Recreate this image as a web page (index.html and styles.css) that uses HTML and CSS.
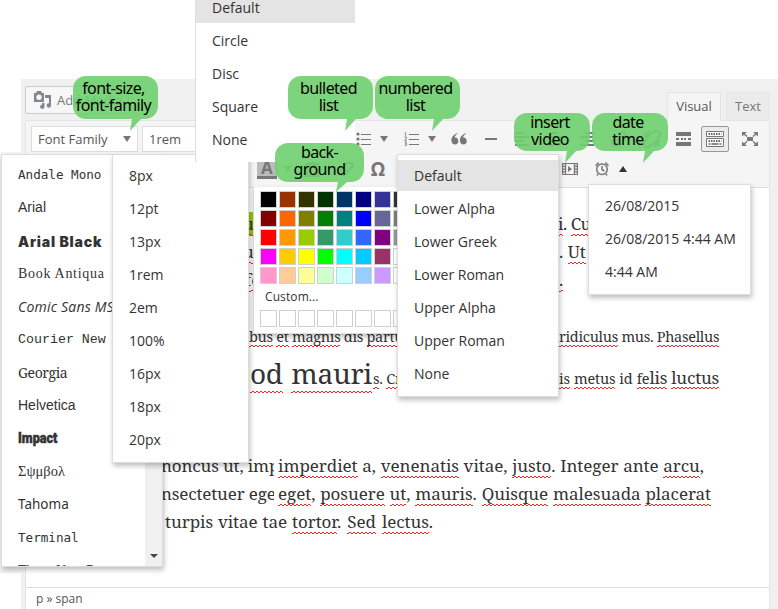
FILE: index.html
```html
<!DOCTYPE html>
<html lang="en">
<head>
<meta charset="utf-8">
<title>Editor</title>
<link rel="stylesheet" href="styles.css">
</head>
<body>
<main class="screen">
  <section class="editor">
    <header class="head">
      <button class="media"><svg width="18" height="18" viewBox="0 0 18 18"><path fill="#82878c" fill-rule="evenodd" d="M0 2h2l1-2h4l1 2h2v9H0zM5 3.500a2.700 2.700 0 1 0 0 5.400a2.700 2.700 0 0 0 0-5.400z"/><path fill="#82878c" d="M11 4h6v10.500a2.200 2.200 0 1 1-2-2.200V7h-4zM8 12h2.500v3.500a2.200 2.200 0 1 1-2.500-2z"/></svg>Add Media</button>
      <nav class="tabs"><span class="tab on">Visual</span><span class="tab">Text</span></nav>
    </header>
    <div class="panel">
      <div class="toolbar">
        <div class="row first">
          <span class="select family">Font Family<i class="caret"></i></span>
          <span class="select size">1rem</span>
          <svg class="ic" width="16" height="14" viewBox="0 0 16 14"><g fill="#777"><circle cx="2" cy="2" r="1.600"/><circle cx="2" cy="7" r="1.600"/><circle cx="2" cy="12" r="1.600"/><path d="M5 2h10v1H5zM5 7h10v1H5zM5 12h10v1H5z"/></g></svg>
          <i class="caret"></i>
          <svg class="ic pushed" width="16" height="14" viewBox="0 0 16 14"><path fill="#777" d="M5 2h10v1H5zM5 7h10v1H5zM5 12h10v1H5z"/><path fill="none" stroke="#777" stroke-width=".9" d="M.6.800h1v3M.5 5h2v1.300L.6 8.300h2.200M.5 10h2l-1 1.500h1v1.800h-2"/></svg>
          <i class="caret"></i>
          <svg class="ic" width="16" height="14" viewBox="0 0 16 14"><path fill="#777" d="M7 1C4.500 3 3.800 4.300 3.600 5.500c2-.4 3.600 1 3.600 3.200A3.300 3.300 0 0 1 3.800 12.500C1.500 12.500.4 10.500.4 8.300.4 5 3 2 7 1zM15.500 1c-2.500 2-3.200 3.300-3.400 4.500 2-.4 3.600 1 3.600 3.200a3.300 3.300 0 0 1-3.400 3.800c-2.300 0-3.400-2-3.400-4.200 0-3.300 2.600-6.300 6.600-7.300z"/></svg>
          <svg class="ic" width="12" height="14" viewBox="0 0 12 14"><path fill="#777" d="M0 6h12v2H0z"/></svg>
          <svg class="ic" width="14" height="14" viewBox="0 0 14 14"><path stroke="#777" stroke-width="2" d="M0 1h9M0 5h14M0 9h9M0 13h14"/></svg>
          <svg class="ic" width="14" height="14" viewBox="0 0 14 14"><path stroke="#777" stroke-width="2" d="M3 1h8M0 5h14M3 9h8M0 13h14"/></svg>
          <svg class="ic" width="14" height="14" viewBox="0 0 14 14"><path stroke="#777" stroke-width="2" d="M5 1h9M0 5h14M5 9h9M0 13h14"/></svg>
          <svg class="ic" width="18" height="18" viewBox="0 0 18 18"><path fill="none" stroke="#777" stroke-width="2" d="M7 11l5-5M8 5l2-2a3.300 3.300 0 0 1 5 5l-3 3M10 13l-2 2a3.300 3.300 0 0 1-5-5l3-3"/></svg>
          <svg class="ic" width="18" height="18" viewBox="0 0 18 18"><path fill="none" stroke="#777" stroke-width="2" d="M9 4l2-2a3.300 3.300 0 0 1 5 5l-2 2M9 14l-2 2a3.300 3.300 0 0 1-5-5l2-2M2 2l5 5M1 6l4 1M6 1l1 4M16 16l-5-5M17 12l-4-1M12 17l-1-4"/></svg>
          <svg class="ic" width="15" height="14" viewBox="0 0 15 14"><path fill="#777" d="M0 0h15v4H0zM0 10h15v4H0zM0 6h3v2H0zM5 6h2v2H5zM8 6h2v2H8zM12 6h3v2h-3z"/></svg>
          <span class="pressed"><svg width="18" height="16" viewBox="0 0 18 16"><path fill="#fff" stroke="#777" d="M.5.500h17v5H.5zM.5 7.500h17v8H.5z"/><path stroke="#666" stroke-width="2" stroke-dasharray="1.500 1" d="M2.500 3h13M2.500 10h13"/><path stroke="#666" stroke-width="1.500" d="M2.500 13h2M5.500 13h7M13.500 13h2"/></svg></span>
          <svg class="ic" width="16" height="14" viewBox="0 0 16 14"><path fill="#777" d="M5 5h6v4H5zM0 0h5L0 4.500zM16 0h-5l5 4.500zM0 14h5L0 9.500zM16 14h-5l5-4.500z"/><path stroke="#777" stroke-width="1.500" d="M1 1l4 3.500M15 1l-4 3.500M1 13l4-3.500M15 13l-4-3.500"/></svg>
        </div>
        <div class="row second">
          <span class="backcolor">A</span>
          <i class="caret"></i>
          <svg class="ic" width="16" height="16" viewBox="0 0 16 16"><path fill="#777" fill-rule="evenodd" d="M1 2h4V0h6v2h4v14H1zM4 7v6h8V7z"/></svg>
          <svg class="ic" width="16" height="16" viewBox="0 0 16 16"><path fill="none" stroke="#777" stroke-width="2" d="M1 11l8-9h5l1 3-8 9H3zM5 7l5 4"/></svg>
          <span class="omega">Ω</span>
          <svg class="ic video" width="16" height="12" viewBox="0 0 16 12"><path fill="#777" fill-rule="evenodd" d="M0 0h16v12H0zM1.200 1.200v1.600h1.700V1.200zM1.200 4v1.600h1.700V4zM1.200 6.700v1.500h1.700V6.700zM1.200 9.400v1.500h1.700V9.400zM4.200 1v10h7.600V1zM13.100 1.200v1.600h1.700V1.200zM13.100 4v1.600h1.700V4zM13.100 6.700v1.500h1.700V6.700zM13.100 9.400v1.500h1.700V9.400z"/><path fill="#777" d="M6 3l4 3-4 3z"/></svg>
          <svg class="ic" width="14" height="14" viewBox="0 0 14 14"><g fill="none" stroke="#777" stroke-width="1.500"><circle cx="7" cy="7.300" r="5.300"/><path d="M7 4v3.500l2.300 1.500M.5 3.800L3.700.6M13.500 3.800L10.300.6M3 12l-1 1.500M11 12l1 1.500"/></g></svg>
          <i class="caret up"></i>
        </div>
      </div>
      <article class="content">
        <div class="line l1"><span class="run a hl"><u>u</u></span><span class="run b"><u>i</u>. <u>Cu</u></span></div>
        <div class="line"><span class="run a"><u>u</u></span><span class="run c">. <u>Ut</u></span></div>
        <div class="line"><span class="run a fe"><u>fe</u></span><span class="run c"><u>.</u></span></div>
        <div class="line small"><span class="run d"><u>bus</u> <u>et</u> <u>magnis</u> dis <u>partu</u></span><span class="run e"><u>ridiculus</u> mus. <u>Phasellus</u></span></div>
        <div class="line large"><span class="run g"><u>od</u> <u>mauri</u></span><span class="run h"><u>s</u>. <u>Cr</u></span><span class="run i"><u>is</u> <u>metus</u> id <u>fe<b>lis</b></u> <u><b>luctus</b></u></span></div>
        <div class="line l6"><span class="run j">noncus ut, imp</span><span class="run k"><u>imperdiet</u> a, <u>venenatis</u> vitae, <u>justo</u>. Integer ante <u>arcu</u>,</span></div>
        <div class="line"><span class="run j">nsectetuer ege</span><span class="run m"><u>eget</u>, <u>posuere</u> <u>ut</u>, <u>mauris</u>. <u>Quisque</u> <u>malesuada</u> <u>placerat</u></span></div>
        <div class="line"><span class="run n">turpis vitae tae</span><span class="run o"><u>tortor</u>. <u>Sed</u> <u>lectus</u>.</span></div>
      </article>
      <footer class="status">p » span</footer>
    </div>
  </section>
  <div class="gutter"></div>

  <div class="menu fonts">
    <ul>
      <li class="andale">Andale Mono</li><li class="arial">Arial</li><li class="black">Arial Black</li><li class="antiqua">Book Antiqua</li><li class="comic">Comic Sans MS</li><li class="courier">Courier New</li><li class="georgia">Georgia</li><li class="arial">Helvetica</li><li class="impact"><span>Impact</span></li><li class="symbol">Σψμβολ</li><li class="tahoma">Tahoma</li><li class="andale">Terminal</li><li class="times">Times New Roman</li>
    </ul>
    <div class="scroll"><i class="caret"></i></div>
  </div>
  <div class="menu colors">
    <div class="swatches" id="swatches"></div>
    <div class="custom">Custom...</div>
    <div class="swatches" id="blank"></div>
  </div>
  <ul class="menu sizes"><li>8px</li><li>12pt</li><li>13px</li><li>1rem</li><li>2em</li><li>100%</li><li>16px</li><li>18px</li><li>20px</li></ul>
  <ul class="menu bullets"><li class="sel">Default</li><li>Circle</li><li>Disc</li><li>Square</li><li>None</li></ul>
  <ul class="menu numbers"><li class="sel">Default</li><li>Lower Alpha</li><li>Lower Greek</li><li>Lower Roman</li><li>Upper Alpha</li><li>Upper Roman</li><li>None</li></ul>
  <ul class="menu dates"><li>26/08/2015</li><li>26/08/2015 4:44 AM</li><li>4:44 AM</li></ul>

  <div class="note n-font">font-size,<br>font-family</div>
  <div class="note n-bullet">bulleted<br>list</div>
  <div class="note n-number">numbered<br>list</div>
  <div class="note n-back">back-<br>ground</div>
  <div class="note n-video">insert<br>video</div>
  <div class="note n-date">date<br>time</div>
</main>
<script src="swatches.js"></script>
</body>
</html>
```
FILE: styles.css
```css
* { box-sizing: border-box; }
body { margin: 0; background: #fff; font: 13px/1.4 "Open Sans", sans-serif; color: #444; }
ul { list-style: none; margin: 0; padding: 0; }
u { text-decoration: none; }
b { font-weight: normal; }
.screen { position: relative; width: 778px; height: 609px; overflow: hidden; padding: 79px 0 0 21px; }
.editor { height: 530px; background: #f0f0f0; padding: 0 8px 0 4px; display: flex; flex-direction: column; }
.head { height: 41px; flex: none; display: flex; justify-content: space-between; align-items: flex-start; padding-top: 7px; }
.media { width: 104px; height: 28px; padding: 0 0 0 8px; display: flex; align-items: center; gap: 5px; border: 1px solid #ccc; border-radius: 3px; background: #f7f7f7; color: #777; font: 13px "Open Sans", sans-serif; white-space: nowrap; }
.tabs { display: flex; gap: 5px; padding-top: 6px; }
.tab { height: 28px; width: 44px; border: 1px solid #e5e5e5; border-bottom: 0; background: #ebebeb; color: #777; text-align: center; line-height: 27px; font-size: 13px; }
.tab.on { width: 54px; height: 29px; position: relative; background: #f5f5f5; color: #555; }
.panel { flex: 1; display: flex; flex-direction: column; border: 1px solid #e5e5e5; border-bottom: 0; background: #fff; }
.toolbar { height: 67px; flex: none; background: #f5f5f5; border-bottom: 1px solid #ddd; padding: 5px 0 0 5px; }
.row { display: grid; align-items: center; justify-items: center; }
.first { height: 26px; grid-template-columns: 111px 207px 29px 12px 36px 12px 42px 22px 40px 24px 42px 22px 44px 18px 46px 24px; }
.second { height: 34px; padding-left: 226px; grid-template-columns: 20px 22px 26px 41px 24px 196px 32px 10px; }
.select { justify-self: start; height: 26px; border: 1px solid #ddd; background: #fff; padding: 0 6px; display: flex; justify-content: space-between; align-items: center; font-size: 13px; color: #555; }
.family { width: 107px; }
.size { width: 90px; }
.ic { display: block; }
.pushed { margin-left: 8px; }
.video { margin-left: 164px; }
.caret { display: block; width: 0; height: 0; border: 4px solid transparent; border-top: 6px solid #777; border-bottom: 0; }
.caret.up { border-top: 0; border-bottom: 6px solid #333; }
.pressed { width: 28px; height: 26px; border: 1px solid #999; border-radius: 2px; background: #ebebeb; display: grid; place-items: center; }
.backcolor { width: 20px; height: 20px; background: #bbb; border-bottom: 3px solid #777; color: #777; font: bold 17px/17px "Noto Sans", sans-serif; text-align: center; }
.omega { color: #777; font: bold 19px/24px "Noto Sans", sans-serif; }
.content { flex: 1; overflow: hidden; padding-top: 22px; font-family: "Noto Serif", "DejaVu Serif Condensed", "DejaVu Serif", serif; font-stretch: condensed; font-size: 17px; color: #333; }
.line { height: 28px; line-height: 28px; display: flex; white-space: nowrap; align-items: baseline; }
.run { display: block; flex: none; text-align-last: justify; }
u { padding-bottom: 1px; background: linear-gradient(90deg, #f22 50%, transparent 50%) 0 100% / 4px 1px repeat-x, linear-gradient(90deg, transparent 50%, #f22 50%) 0 calc(100% - 1px) / 4px 1px repeat-x; }
.a { margin-left: 217px; width: 11px; text-align-last: left; }
.fe { margin-left: 219px; width: 9px; }
.hl u { background-color: #9c0; }
.b { margin-left: 304px; width: 36px; text-align-last: left; letter-spacing: -.5px; }
.c { margin-left: 305px; width: 26px; }
.small { margin-top: 28px; font-size: 14.500px; letter-spacing: -.3px; }
.d { margin-left: 223px; width: 148px; }
.e { margin-left: 162px; width: 160px; }
.large { height: 42px; line-height: 46px; font-size: 14.500px; letter-spacing: -.2px; }
.g { margin-left: 224px; width: 122px; font-size: 28px; letter-spacing: -.3px; }
.h { margin-left: 1px; width: 24px; text-align-last: left; }
.i { margin-left: 162px; width: 160px; }
.i b { font-size: 17px; }
.l6 { margin-top: 60px; }
.j { margin-left: 135px; width: 113px; overflow: hidden; letter-spacing: -.15px; }
.k { margin-left: 4px; width: 426px; letter-spacing: -.05px; }
.m { margin-left: 4px; width: 433px; letter-spacing: -.05px; }
.n { margin-left: 139px; width: 122px; letter-spacing: -.05px; }
.o { margin-left: 5px; width: 141px; letter-spacing: -.05px; }
.status { height: 22px; flex: none; border-top: 1px solid #ddd; padding-left: 10px; line-height: 22px; font-size: 12px; color: #555; }
.gutter { position: absolute; left: 0; top: 152px; width: 25px; height: 421px; background: #f5f5f5; }

.menu { position: absolute; background: #fff; border: 1px solid #ddd; box-shadow: 1px 3px 5px rgba(0,0,0,.25); color: #333; font-size: 14px; }
.menu li { height: 33px; line-height: 33px; padding-left: 16px; white-space: nowrap; }
.fonts { left: 1px; top: 154px; width: 162px; height: 413px; display: flex; overflow: hidden; padding-top: 3px; }
.fonts ul { width: 143px; overflow: hidden; }
.scroll { width: 17px; margin-top: -3px; background: #f0f0f0; display: flex; align-items: flex-end; justify-content: center; padding-bottom: 8px; }
.scroll .caret { border-top: 4px solid #444; }
.sizes { left: 112px; top: 154px; width: 137px; height: 309px; padding-top: 4px; }
.bullets { left: 195px; top: -10px; width: 160px; height: 172px; border-right: 0; border-bottom: 0; box-shadow: none; }
.bullets .sel { height: 32px; margin-bottom: 1px; }
.numbers { left: 397px; top: 154px; width: 162px; height: 243px; padding-top: 5px; }
.sel { background: #e4e4e4; }
.menu.numbers .sel { height: 31px; line-height: 31px; margin-bottom: 1px; }
.dates { left: 588px; top: 184px; width: 163px; height: 111px; padding-top: 4px; }
.colors { left: 253px; top: 187px; width: 160px; height: 147px; padding: 3px 6px; border-top: 0; }
.swatches { display: grid; grid-template-columns: repeat(8, 17px); gap: 2px; }
.swatches i { height: 17px; border: 1px solid #d0d0d0; }
.colors .swatches { padding-top: 1px; }
.custom { height: 25px; line-height: 26px; padding-left: 5px; font-size: 12px; letter-spacing: .1px; }

.andale { font: 12.600px "DejaVu Sans Mono", monospace; }
.arial { font-family: "Liberation Sans", sans-serif; }
.black { font: 900 14px Inter, sans-serif; letter-spacing: .8px; }
.menu .black { line-height: 35px; }
.antiqua { font: 14px "Liberation Serif", serif; letter-spacing: .7px; }
.comic { font: italic 14px "Open Sans", sans-serif; letter-spacing: .2px; }
.courier { font: 13.300px "Liberation Mono", monospace; }
.georgia { font: 14px "Noto Serif", "DejaVu Serif Condensed", serif; letter-spacing: -.4px; }
.impact { font: 900 14.500px Roboto, sans-serif; }
.impact span { display: inline-block; transform: scaleX(.87); transform-origin: left; -webkit-text-stroke: .5px #333; }
.symbol { font: 14.500px "Liberation Serif", serif; }
.tahoma { font: 13.500px "Noto Sans", sans-serif; }
.times { font: 14px "Liberation Serif", serif; }

.note { position: absolute; border-radius: 13px; background: rgba(110,207,110,.9); color: #000; font: 16px/17px "Noto Sans", sans-serif; letter-spacing: -.6px; text-align: center; width: 85px; height: 43px; padding: 4px 4px 0 0; white-space: nowrap; }
.note::after { content: ""; position: absolute; top: 100%; left: 57px; width: 11px; height: 12px; background: inherit; clip-path: polygon(18% 0, 100% 0, 0 100%); }
.n-font { left: 73px; top: 76px; }
.n-bullet { left: 288px; top: 76px; }
.n-number { left: 375px; top: 76px; }
.n-back { left: 275px; top: 143px; width: 89px; height: 39px; padding-top: 1px; padding-right: 0; }
.n-back::after { left: 61px; height: 10px; }
.n-video, .n-date { top: 113px; width: 76px; height: 38px; padding-top: 1px; }
.n-video { left: 514px; }
.n-date { left: 592px; }
.n-video::after, .n-date::after { left: 51px; }
```
FILE: swatches.js
```js
const colors = "000000 993300 333300 003300 003366 000080 333399 333333 800000 ff6600 808000 008000 008080 0000ff 666699 808080 ff0000 ff9900 99cc00 339966 33cccc 3366ff 800080 999999 ff00ff ffcc00 ffff00 00ff00 00ffff 00ccff 993366 ffffff ff99cc ffcc99 ffff99 ccffcc ccffff 99ccff cc99ff ffffff".split(" ");
function addSwatches(id, list) {
  const box = document.getElementById(id);
  list.forEach(c => {
    const cell = document.createElement("i");
    cell.style.background = "#" + c;
    box.append(cell);
  });
}
addSwatches("swatches", colors);
addSwatches("blank", Array(8).fill("ffffff"));
```
